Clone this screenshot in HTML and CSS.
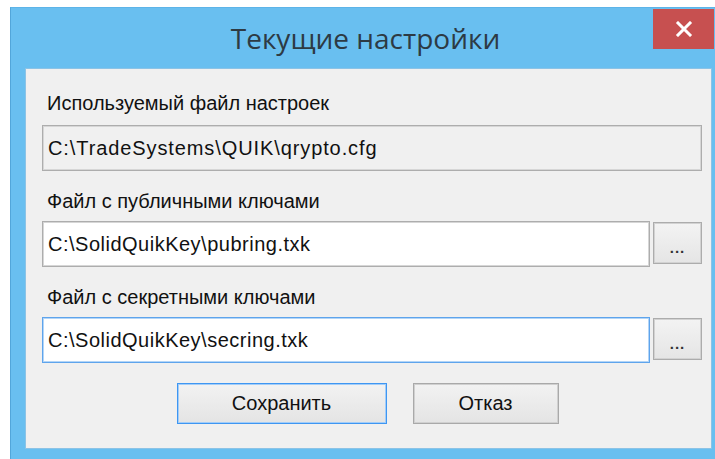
FILE: index.html
```html
<!DOCTYPE html>
<html lang="ru">
<head>
<meta charset="utf-8">
<title>Текущие настройки</title>
<link rel="stylesheet" href="styles.css">
</head>
<body>
<div class="screen">
  <div class="window">
    <div class="titlebar">
      <div class="title">Текущие настройки</div>
      <div class="close" aria-label="Закрыть">
        <svg width="18" height="16" viewBox="0 0 18 16">
          <path d="M3 2 L15 14 M15 2 L3 14" stroke="#fff" stroke-width="3" stroke-linecap="square" fill="none"/>
        </svg>
      </div>
    </div>
    <div class="client">
      <div class="label first">Используемый файл настроек</div>
      <div class="field readonly">C:\TradeSystems\QUIK\qrypto.cfg</div>

      <div class="label">Файл с публичными ключами</div>
      <div class="row">
        <div class="field">C:\SolidQuikKey\pubring.txk</div>
        <div class="browse">...</div>
      </div>

      <div class="label">Файл с секретными ключами</div>
      <div class="row">
        <div class="field focused">C:\SolidQuikKey\secring.txk</div>
        <div class="browse">...</div>
      </div>

      <div class="actions">
        <div class="btn default">Сохранить</div>
        <div class="btn cancel">Отказ</div>
      </div>
    </div>
  </div>
</div>
</body>
</html>
```

FILE: styles.css
```css
html, body {
  margin: 0;
  padding: 0;
  background: #ffffff;
}

.screen {
  width: 715px;
  height: 459px;
  overflow: hidden;
  padding: 7px 0 0 10px;
  box-sizing: border-box;
}

.window {
  width: 710px;
  height: 470px;
  background: #69bff0;
  border-left: 1px solid #52a6da;
  border-top: 1px solid #5db4e8;
  box-sizing: border-box;
  display: flex;
  flex-direction: column;
}

.titlebar {
  height: 60px;
  display: grid;
  grid-template-columns: 1fr auto 1fr;
  flex: none;
}

.title {
  grid-column: 2;
  align-self: center;
  margin-top: -1px;
  font-family: "Open Sans", "Noto Sans", sans-serif;
  font-size: 28px;
  color: #2d3a44;
}

.close {
  grid-column: 3;
  justify-self: end;
  align-self: start;
  margin: 1px 6px 0 0;
  width: 61px;
  height: 40px;
  background: #c75050;
  display: flex;
  align-items: center;
  justify-content: center;
}

.client {
  margin: 0 8px 0 14px;
  height: 381px;
  background: #f0f0f0;
  border: 1px solid #8cc3e6;
  box-sizing: border-box;
  padding: 22px 9px 0 16px;
  display: flex;
  flex-direction: column;
  font-family: "Liberation Sans", Arial, sans-serif;
  font-size: 20px;
  color: #111111;
}

.label {
  height: 24px;
  line-height: 24px;
  padding-left: 5px;
  margin: 18px 0 8px;
}

.label.first {
  margin: 0 0 10px;
}

.field {
  height: 46px;
  box-sizing: border-box;
  border: 1px solid #adadad;
  box-shadow: inset 0 0 0 1px #d6d6d6;
  background: #ffffff;
  padding-left: 5px;
  line-height: 44px;
  white-space: nowrap;
  letter-spacing: 0.5px;
}

.field.readonly {
  background: #f0f0f0;
  letter-spacing: 0.9px;
}

.field.focused {
  border-color: #5ea4ec;
  box-shadow: inset 0 0 0 1px #b3d5f7;
}

.row {
  display: flex;
  align-items: flex-start;
  gap: 3px;
}

.row .field {
  flex: 1;
}

.browse {
  width: 49px;
  height: 42px;
  margin-top: 1px;
  box-sizing: border-box;
  border: 1px solid #acacac;
  box-shadow: inset 0 0 0 1px #d2d2d2;
  background: linear-gradient(#f3f3f3, #e5e5e5);
  text-align: center;
  font-size: 15px;
  font-weight: bold;
  line-height: 50px;
  letter-spacing: 1px;
  color: #333;
}

.actions {
  margin-top: 20px;
  display: flex;
  justify-content: center;
  gap: 26px;
  padding-right: 9px;
}

.btn {
  height: 41px;
  box-sizing: border-box;
  background: linear-gradient(#f2f2f2, #e4e4e4);
  text-align: center;
  line-height: 39px;
}

.btn.default {
  width: 210px;
  border: 1px solid #3e96f2;
  box-shadow: inset 0 0 0 1px #a3cdf8;
}

.btn.cancel {
  width: 146px;
  border: 1px solid #a9a9a9;
  box-shadow: inset 0 0 0 1px #d0d0d0;
}
```
